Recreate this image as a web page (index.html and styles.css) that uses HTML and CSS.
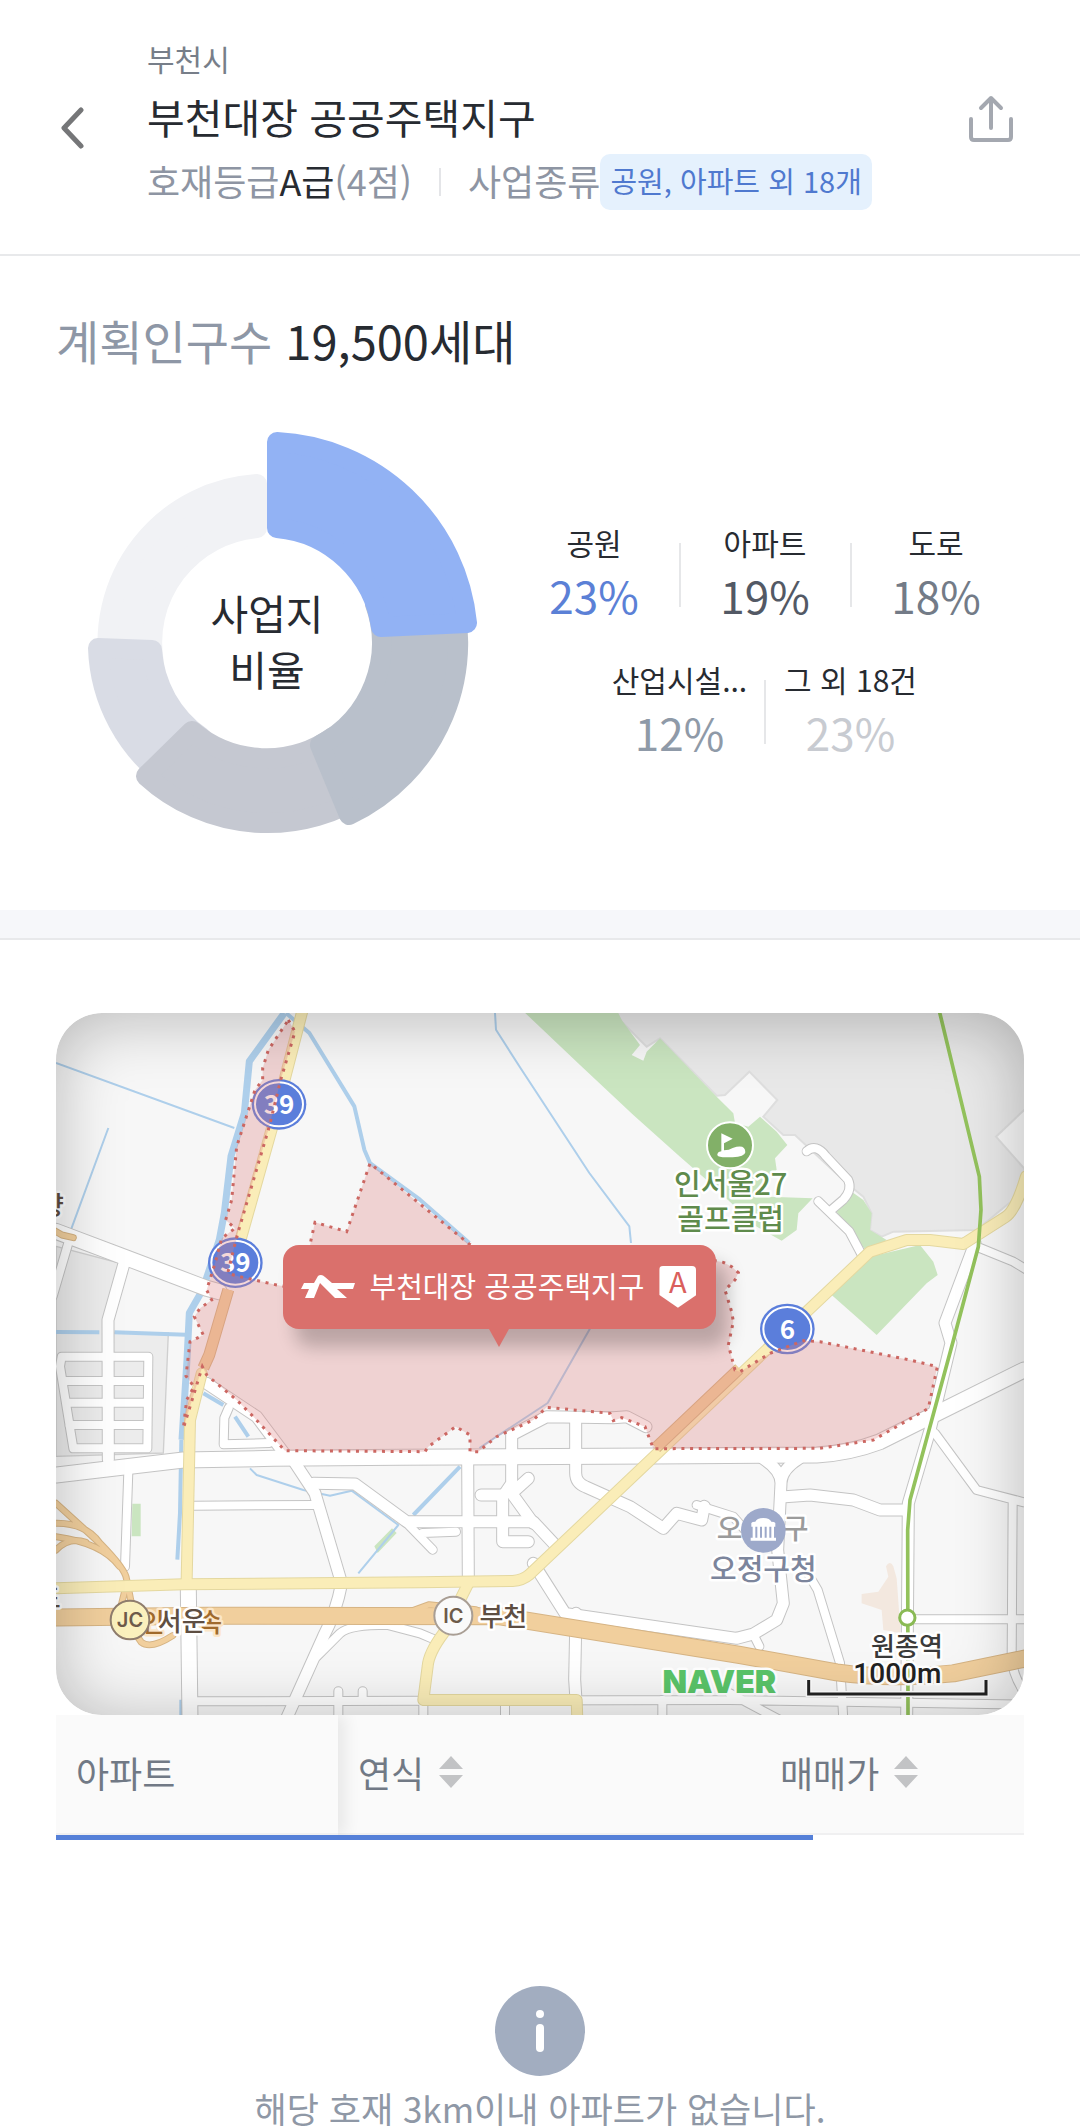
FILE: index.html
```
<!DOCTYPE html>
<html lang="ko">
<head>
    <meta charset="UTF-8">
    <meta name="viewport" content="width=device-width, initial-scale=1.0">
    <title>부천대장 공공주택지구</title>
    <link rel="stylesheet" href="styles.css">
</head>
<body>
    <header class="header">
        <button class="icon-button" type="button" aria-label="뒤로">
            <svg width="28" height="44" viewBox="0 0 28 44"><path class="back-line" d="M25 4 L8 22 L25 40"/></svg>
        </button>
        <div class="header-text">
            <p class="city">부천시</p>
            <h1>부천대장 공공주택지구</h1>
            <div class="meta">
                <span>호재등급<strong>A급</strong>(4점)</span>
                <i class="meta-divider"></i>
                <span>사업종류</span>
                <span class="chip">공원, 아파트 외 18개</span>
            </div>
        </div>
        <button class="icon-button share" type="button" aria-label="공유">
            <svg width="46" height="50" viewBox="0 0 46 50"><path class="share-line" d="M3 25 V43 Q3 46 6 46 H40 Q43 46 43 43 V25 M23 34 V4 M13 14 L23 4 L33 14"/></svg>
        </button>
    </header>

    <main>
        <section class="plan">
            <h2><span>계획인구수</span> 19,500세대</h2>
            <div class="plan-body">
                <div class="donut">
                    <svg viewBox="-215 -215 430 430" aria-hidden="true">
                        <path class="slice slice-5" d="M-157 28 A159 159 0 0 1 -10 -159 L-10 -115 A115 115 0 0 0 -113 20 Z"/>
                        <path class="slice slice-4" d="M-97 138 A169 169 0 0 1 -169 5 L-115 7 A115 115 0 0 0 -66 94 Z"/>
                        <path class="slice slice-3" d="M103 148 A180 180 0 0 1 -121 133 L-75 88 A115 115 0 0 0 66 94 Z"/>
                        <path class="slice slice-2" d="M180 -65 A191 191 0 0 1 82 172 L53 102 A115 115 0 0 0 108 -39 Z"/>
                        <path class="slice slice-1" d="M10 -201 A201 201 0 0 1 200 -20 L114 -16 A115 115 0 0 0 10 -115 Z"/>
                    </svg>
                    <p class="donut-title">사업지<br>비율</p>
                </div>
                <div class="legend">
                    <div class="legend-row">
                        <div class="legend-item"><span>공원</span><b class="rate-1">23%</b></div>
                        <i class="legend-divider"></i>
                        <div class="legend-item"><span>아파트</span><b class="rate-2">19%</b></div>
                        <i class="legend-divider"></i>
                        <div class="legend-item"><span>도로</span><b class="rate-3">18%</b></div>
                    </div>
                    <div class="legend-row">
                        <div class="legend-item"><span>산업시설...</span><b class="rate-4">12%</b></div>
                        <i class="legend-divider"></i>
                        <div class="legend-item"><span>그 외 18건</span><b class="rate-5">23%</b></div>
                    </div>
                </div>
            </div>
        </section>

        <section class="area">
            <div class="map">
                <svg class="map-canvas" viewBox="0 0 2904 2106" role="img" aria-label="부천대장 공공주택지구 지도">
                    <defs>
                        <g id="road-lg">
                            <path d="M0 1386 L382 1341 L652 1336 L1032 1333 L1792 1329 L2282 1326 Q2382 1320 2472 1286 L2612 1216 L2904 1071"/>
                            <path d="M0 655 L202 731 L452 826 L490 836"/>
                            <path d="M397 1731 L402 2120"/>
                        </g>
                        <g id="road-md">
                            <path d="M207 741 L156 921 L157 1340"/>
                            <path d="M717 1350 L777 1441 L857 1711 Q840 1800 802 1871 L690 2120"/>
                            <path d="M772 1411 L897 1413 L1052 1526 L1432 1526 L1502 1601"/>
                            <path d="M1235 1340 L1237 1701"/>
                            <path d="M1367 1330 L1367 1266 L1472 1211 L1672 1214 L1712 1211 L1770 1241"/>
                            <path d="M1367 1330 L1367 1411 L1340 1451 L1340 1586 L1417 1586"/>
                            <path d="M1275 1446 L1340 1446 M1417 1396 L1367 1441 L1432 1531"/>
                            <path d="M1559 1226 L1559 1380 Q1559 1410 1590 1422 L1722 1481 L1822 1546 L1862 1501 L1937 1521 L1945 1480"/>
                            <path d="M1432 1651 L1527 1801 L2042 1876 L2092 1863 L2162 1821 L2182 1771 L2165 1611 L2175 1411 Q2175 1371 2120 1336 M2175 1411 Q2175 1371 2230 1336"/>
                            <path d="M2187 1451 L2262 1446 L2392 1461 L2472 1491 L2542 1491"/>
                            <path d="M2757 690 L2667 930 L2685 990 L2622 1251 L2557 1471 L2552 2120"/>
                            <path d="M1560 1801 L1556 2000 L1560 2061"/>
                            <path d="M452 1111 L602 1211 L692 1331"/>
                        </g>
                        <g id="road-sm">
                            <path d="M37 690 L-10 850"/>
                            <path d="M217 1375 L207 1661"/>
                            <path d="M412 1478 L782 1476"/>
                            <path d="M1922 1476 L2032 1511 L2092 1580"/>
                            <path d="M2255 1680 L2285 1731 L2352 1950 L2362 2120"/>
                            <path d="M2637 1261 L2762 1431 L2904 1468 M2870 1466 L2867 1930 Q2867 1990 2920 2060 M2562 1819 L2920 1819"/>
                            <path d="M2772 705 L2872 746 L2920 775"/>
                            <path d="M2252 415 Q2280 390 2310 430 L2376 500 Q2390 530 2362 560 L2327 590 M2287 565 L2380 655 L2417 725"/>
                            <path d="M415 2065 L2020 2061 L2904 2075 M2020 2040 L2170 2120 M2090 1860 L2110 1900"/>
                            <path d="M847 2035 L847 2120 M920 2035 L920 2061 M1102 2061 L1102 2120 M1347 2061 L1347 2120 M1819 2061 L1819 2120"/>
                            <path d="M782 1931 L852 1861 Q880 1835 992 1835 L1092 1861 L1132 1878"/>
                            <path d="M1052 1530 L1130 1610 M1100 1560 L1200 1556"/>
                            <path d="M518 1185 L505 1215 L503 1294 L640 1290"/>
                            <path d="M17 1031 H277 L274 1306 H52 L12 1060 Z M30 1104 H275 M36 1169 H275 M40 1236 H275"/>
                        </g>
                        <g id="road-yellow">
                            <path d="M740 -10 L652 331 L520 800"/>
                            <path d="M437 1081 L402 1221 L392 1701"/>
                            <path d="M0 1726 L382 1714 L1092 1708 L1370 1704 Q1400 1702 1420 1685 L2442 716 L2552 681 L2622 681 L2722 693 L2850 611 Q2880 590 2910 490"/>
                            <path d="M1237 1711 L1162 1861 Q1118 1920 1115 1960 L1102 2061 L1562 2061 L1564 2120"/>
                        </g>
                        <g id="ramps">
                            <path d="M0 1471 L132 1591 Q210 1670 212 1700 L232 1800 M0 1531 Q90 1530 132 1591 M0 1571 Q140 1590 190 1660 M0 1611 Q40 1570 90 1588 M212 1710 L190 1800"/>
                            <path d="M230 1850 L256 1888 Q285 1910 350 1868"/>
                            <path d="M1050 1800 L1120 1775 L1260 1790 L1240 1825 L1150 1870"/>
                            <path d="M-10 650 L18 666 L52 674"/>
                        </g>
                        <path id="highway" d="M-10 1814 L452 1808 L1332 1810 Q1400 1822 2052 1926 L2342 1978 Q2500 2000 2692 1981 L2920 1934"/>
                        <path id="trunk" d="M517 830 L460 1025 L442 1065 M1800 1304 L2050 1067"/>
                        <g id="shield-route">
                            <ellipse class="shield" rx="82" ry="76"/>
                            <ellipse class="shield-ring" rx="72" ry="66"/>
                        </g>
                    </defs>

                    <!-- land and parks -->
                    <path class="town" d="M1682 0 L1697 26 L1772 101 L1812 76 L1982 248 L2007 246 L2080 176 L2164 261 L2122 311 L2182 366 L2217 366 L2372 511 L2422 551 L2447 601 L2442 651 L2477 671 L2512 656 L2762 651 L2920 520 L2904 466 L2820 371 L2920 276 L2920 -10 L1682 -10 Z"/>
                    <path class="block" d="M0 700 L190 750 L140 921 L140 960 H337 L322 1320 L0 1330 Z"/>
                    <path class="park" d="M1397 -10 L1682 -10 L1697 21 L1752 96 L1727 126 L1762 143 L1772 116 L1812 76 L1982 251 L2032 301 L2037 330 L2077 341 L2112 311 L2162 356 L2194 396 L2157 436 L2162 470 L2100 550 L2270 556 L2227 601 L2222 651 L2177 683 L2100 640 L1952 501 L1872 431 L1732 306 L1572 156 Z"/>
                    <path class="park" d="M2387 536 L2422 561 L2447 601 L2442 651 L2492 681 L2432 716 L2342 596 Z"/>
                    <path class="park" d="M2327 846 L2442 731 L2592 696 L2632 746 L2645 786 L2612 811 L2462 966 L2412 921 Z"/>
                    <path class="park" d="M229 1472 H254 V1570 H227 Z M955 1600 L1008 1546 L1022 1560 L965 1620 Z"/>
                    <path class="plaza" d="M2417 1743 L2467 1736 L2497 1691 L2490 1660 Q2502 1640 2512 1660 L2522 1696 L2534 1861 L2482 1851 L2477 1791 L2417 1771 Z"/>

                    <!-- water -->
                    <path class="water water-lg" d="M685 0 L580 145 L565 300 L525 430 L505 600 L490 680 L440 830 L400 900 L393 1040 L378 1280"/>
                    <path class="water water-md" d="M376 1280 L372 1500 L364 1640 M376 2060 V2110"/>
                    <path class="water water-md" d="M0 957 L130 958 M175 958 L390 965 M442 1141 L502 1176 M537 1211 L577 1271 M1212 1361 L1072 1506"/>
                    <path class="water water-sm" d="M0 150 L535 345 M157 345 L45 650"/>
                    <path class="water water-md" d="M690 0 L760 60 L895 280 L925 410 L942 450 L1092 560 L1240 690"/>
                    <path class="water water-sm" d="M1317 0 L1320 50 L1390 160 L1600 480 L1720 640 L1725 690 M1603 945 L1475 1170 L1270 1305"/>
                    <path class="water water-sm" d="M582 1366 L602 1386 L742 1431 L822 1448 L887 1433 L1027 1536 L907 1681"/>

                    <!-- roads, casing first and then the fill -->
                    <g class="road casing"><use href="#road-sm" class="w30"/><use href="#road-md" class="w39"/><use href="#road-lg" class="w51"/></g>
                    <g class="road white"><use href="#road-sm" class="w24"/><use href="#road-md" class="w33"/><use href="#road-lg" class="w45"/></g>
                    <g class="road ramp-casing"><use href="#ramps" class="w21"/><use href="#highway" class="w54"/></g>
                    <g class="road orange"><use href="#ramps" class="w15"/><use href="#highway" class="w48"/></g>
                    <use href="#road-yellow" class="road yellow-casing w36"/>
                    <use href="#road-yellow" class="road yellow w30"/>
                    <use href="#trunk" class="road trunk ramp-casing w36"/>
                    <use href="#trunk" class="road trunk orange w30"/>

                    <!-- subway line -->
                    <path class="subway" d="M2649 -10 L2770 491 L2775 590 L2767 701 L2690 990 L2562 1461 L2555 1551 L2556 2110"/>
                    <circle class="station" cx="2554" cy="1814" r="23"/>

                    <use href="#shield-route" x="669" y="274"/>
                    <use href="#shield-route" x="538" y="749"/>
                    <use href="#shield-route" x="2194" y="948"/>
                    <text class="shield-text" x="669" y="303">39</text>
                    <text class="shield-text" x="538" y="778">39</text>
                    <text class="shield-text" x="2194" y="977">6</text>

                    <path class="district" d="M697 21 L717 56 L674 201 L640 340 L547 655 L535 701 L515 781 L552 791 L662 816 L740 830 L765 681 L777 628 L872 656 L942 451 L1237 691 L1300 740 L1960 740 L2002 748 L2027 761 L2047 779 L2037 801 L2007 831 L2027 896 L2032 926 L2017 996 L2037 1071 L2052 1076 L2142 1021 L2242 983 L2292 986 L2562 1041 L2644 1061 L2617 1186 L2452 1281 L2292 1306 L1792 1307 L1767 1241 L1697 1214 L1672 1223 L1662 1201 L1472 1183 L1432 1221 L1322 1271 L1267 1316 L1242 1316 L1242 1266 L1199 1241 L1117 1301 L1107 1316 L687 1313 L592 1211 L542 1161 L452 1086 L439 1061 L382 1246 L392 1161 L414 1121 L390 1089 L402 986 L442 966 L415 911 L432 886 L467 861 L452 831 L477 751 L497 676 L537 646 L509 621 L527 561 L542 401 L597 231 L620 201 L620 166 L637 111 Z"/>

                    <!-- place marks -->
                    <circle class="mark-golf" cx="2022" cy="397" r="69"/>
                    <path class="mark-shape" d="M1996 361 L2030 377 L2004 391 V412 Q2020 412 2030 405 Q2068 392 2068 418 Q2066 432 2030 433 H2000 Q1982 431 1984 423 Q1986 416 1996 415 Z"/>
                    <text class="label golf" x="2024" y="545">인서울27</text>
                    <text class="label golf" x="2024" y="652">골프클럽</text>
                    <text class="label ward" x="2021" y="1579">오</text>
                    <text class="label ward" x="2219" y="1579">구</text>
                    <circle class="mark-office" cx="2122" cy="1552" r="67"/>
                    <path class="mark-shape" d="M2086 1541 V1530 Q2088 1526 2098 1526 Q2102 1516 2122 1515 Q2142 1516 2146 1526 Q2156 1526 2158 1530 V1541 Z M2090 1541 h8 v33 h-8 Z M2104 1541 h8 v33 h-8 Z M2118 1541 h8 v33 h-8 Z M2132 1541 h8 v33 h-8 Z M2146 1541 h8 v33 h-8 Z M2084 1574 H2160 V1583 H2084 Z"/>
                    <text class="label office" x="2122" y="1700">오정구청</text>
                    <text class="label station-name" x="2553" y="1929">원종역</text>
                    <text class="label expressway" x="290" y="1856">인</text>
                    <text class="label expressway" x="463" y="1856">속</text>
                    <text class="label exit" x="377" y="1854">서운</text>
                    <circle class="junction" cx="222" cy="1821" r="58"/>
                    <text class="junction-text" x="222" y="1842">JC</text>
                    <circle class="exit-mark" cx="1192" cy="1808" r="57"/>
                    <text class="junction-text" x="1192" y="1830">IC</text>
                    <text class="label exit" x="1342" y="1839">부천</text>
                    <text class="label exit" x="-12" y="605">향</text>
                    <text class="label exit" x="-22" y="1785">도</text>

                    <path class="scale-halo" d="M2258 2001 V2043 H2790 V2001"/>
                    <path class="scale-line" d="M2258 2001 V2043 H2790 V2001"/>
                    <text class="label scale-text" x="2524" y="2011">1000m</text>
                    <text class="label naver" x="1990" y="2041">NAVER</text>
                </svg>
                <div class="pin">
                    <svg width="54" height="24" viewBox="0 0 54 24"><path class="pin-shape" d="M3 8 H13 L17 1 Q18 0 20 0 Q22 0 24 2 L31 8 H54 L52 14 H36 L46 23 H34 L19 8 L13 23 H4 L8 14 H0 Z"/></svg>
                    <span class="pin-name">부천대장 공공주택지구</span>
                    <span class="grade">A</span>
                </div>
            </div>

            <table class="apartments">
                <thead>
                    <tr>
                        <th class="col-name" scope="col">아파트</th>
                        <th class="col-year" scope="col"><button class="sort" type="button">연식<svg width="24" height="32" viewBox="0 0 24 32"><path d="M12 0 L24 13 H0 Z M0 19 H24 L12 32 Z"/></svg></button></th>
                        <th scope="col"><button class="sort" type="button">매매가<svg width="24" height="32" viewBox="0 0 24 32"><path d="M12 0 L24 13 H0 Z M0 19 H24 L12 32 Z"/></svg></button></th>
                    </tr>
                </thead>
            </table>
            <div class="scroll-bar"></div>

            <div class="empty">
                <svg width="90" height="90" viewBox="0 0 90 90" aria-hidden="true">
                    <circle class="info-bg" cx="45" cy="45" r="45"/>
                    <circle class="info-mark" cx="45" cy="28" r="4"/>
                    <rect class="info-mark" x="41" y="38" width="8" height="28" rx="4"/>
                </svg>
                <p>해당 호재 3km이내 아파트가 없습니다.</p>
            </div>
        </section>
    </main>
</body>
</html>
```
FILE: styles.css
```
* {
    box-sizing: border-box;
}
body {
    margin: 0;
    background: #fff;
    color: #272b31;
    font-family: "Noto Sans CJK KR", "Noto Sans", sans-serif;
}
h1, h2, p {
    margin: 0;
    font-weight: 400;
}
button {
    padding: 0;
    border: none;
    background: none;
    color: inherit;
    font: inherit;
    cursor: pointer;
}

/* header */
.header {
    display: flex;
    align-items: flex-start;
    padding: 38px 66px 44px 56px;
    border-bottom: 2px solid #e8e9eb;
}
.icon-button {
    display: flex;
    flex: none;
    width: 91px;
    padding-top: 68px;
}
.icon-button svg {
    display: block;
}
.share {
    width: 46px;
    padding-top: 56px;
}
.back-line, .share-line {
    fill: none;
    stroke: #757678;
    stroke-width: 5;
    stroke-linecap: round;
    stroke-linejoin: round;
}
.share-line {
    stroke: #a4a8b0;
    stroke-width: 4;
}
.header-text {
    display: flex;
    flex: 1;
    flex-direction: column;
    gap: 10px;
}
.city {
    color: #777e89;
    font-size: 30px;
    line-height: 40px;
}
.header h1 {
    font-size: 41px;
    line-height: 56px;
}
.meta {
    display: flex;
    align-items: center;
    color: #8e95a3;
    font-size: 36px;
    white-space: nowrap;
}
.meta span {
    padding-bottom: 4px;
    line-height: 52px;
}
.meta strong {
    color: #272b31;
    font-weight: 400;
}
.meta-divider {
    width: 2px;
    height: 28px;
    margin: 0 27px;
    background: #e4e5e8;
}
.meta .chip {
    padding: 0 10px 4px;
    border-radius: 10px;
    background: #e5f1fd;
    color: #4f79cf;
    font-size: 29px;
}

/* plan */
.plan {
    padding: 56px 32px 52px 52px;
}
.plan h2 {
    padding-left: 4px;
    font-size: 47px;
    line-height: 56px;
}
.plan h2 span {
    color: #8e97a6;
}
.plan-body {
    display: flex;
    align-items: center;
    margin-top: 60px;
}
.donut {
    display: grid;
    flex: none;
    width: 430px;
    place-items: center;
}
.donut svg, .donut-title {
    grid-area: 1 / 1;
}
.donut svg {
    display: block;
    width: 100%;
}
.donut-title {
    padding-bottom: 6px;
    font-size: 41px;
    line-height: 56px;
    text-align: center;
}
.slice {
    stroke-width: 20;
    stroke-linejoin: round;
}
.slice-1 { fill: #92b2f4; stroke: #92b2f4; }
.slice-2 { fill: #b9c0cb; stroke: #b9c0cb; }
.slice-3 { fill: #c5c8d1; stroke: #c5c8d1; }
.slice-4 { fill: #d9dce5; stroke: #d9dce5; }
.slice-5 { fill: #f1f2f5; stroke: #f1f2f5; }
.legend {
    display: flex;
    flex: 1;
    flex-direction: column;
    gap: 35px;
}
.legend-row {
    display: flex;
    align-items: center;
    justify-content: center;
}
.legend-item {
    display: flex;
    flex-direction: column;
    gap: 7px;
    width: 169px;
    padding-bottom: 3px;
    text-align: center;
    white-space: nowrap;
}
.legend-item span {
    font-size: 30px;
    line-height: 36px;
}
.legend-item b {
    font-size: 44px;
    font-weight: 400;
    line-height: 56px;
}
.legend-divider {
    width: 2px;
    height: 64px;
    background: #e6e7e9;
}
.rate-1 { color: #5b80d6; }
.rate-2 { color: #535965; }
.rate-3 { color: #737b87; }
.rate-4 { color: #8f9aa8; }
.rate-5 { color: #c8cbd1; }

/* map */
.area {
    padding: 0 56px;
}
.area::before {
    display: block;
    height: 28px;
    margin: 0 -56px 73px;
    border-bottom: 2px solid #e8e9eb;
    background: #f6f7fa;
    content: "";
}
.map {
    position: relative;
    overflow: hidden;
    border-radius: 46px;
    background: #f7f7f7;
}
.map::after {
    position: absolute;
    inset: 0;
    border-radius: 46px;
    box-shadow: inset 0 6px 66px rgba(0, 0, 0, 0.26);
    content: "";
    pointer-events: none;
}
.map-canvas {
    display: block;
    width: 100%;
    height: auto;
}
.town { fill: #e8e8e8; stroke: #dedede; stroke-width: 6; }
.block { fill: #ececec; stroke: #cfcfcf; stroke-width: 4; }
.park { fill: #cae5c0; }
.plaza { fill: #f3e8df; }
.water {
    fill: none;
    stroke: #aecfeb;
    stroke-linejoin: round;
}
.water-lg { stroke-width: 21; }
.water-md { stroke-width: 12; }
.water-sm { stroke-width: 6; }
.road {
    fill: none;
    stroke-linecap: round;
    stroke-linejoin: round;
}
.trunk { stroke-linecap: butt; }
.casing { stroke: #c4c4c4; }
.white { stroke: #fff; }
.yellow-casing { stroke: #e4d8a0; }
.yellow { stroke: #faedb8; }
.ramp-casing { stroke: #d6b484; }
.orange { stroke: #f1cf9d; }
.w15 { stroke-width: 15; }
.w21 { stroke-width: 21; }
.w24 { stroke-width: 24; }
.w30 { stroke-width: 30; }
.w33 { stroke-width: 33; }
.w36 { stroke-width: 36; }
.w39 { stroke-width: 39; }
.w45 { stroke-width: 45; }
.w48 { stroke-width: 48; }
.w51 { stroke-width: 51; }
.w54 { stroke-width: 54; }
.subway {
    fill: none;
    stroke: #93c25c;
    stroke-width: 11;
}
.station { fill: #fff; stroke: #8aba55; stroke-width: 9; }
.shield { fill: #5b7edb; }
.shield-ring { fill: none; stroke: #fff; stroke-width: 6; }
.shield-text {
    fill: #fff;
    font-size: 78px;
    font-weight: 700;
    text-anchor: middle;
}
.district {
    fill: rgba(222, 125, 125, 0.3);
    stroke: #cc6762;
    stroke-width: 9;
    stroke-dasharray: 9 17;
}
.label {
    paint-order: stroke;
    stroke: #fff;
    stroke-width: 15;
    stroke-linejoin: round;
    font-size: 78px;
    font-weight: 500;
    text-anchor: middle;
}
.golf { fill: #5f8b4c; font-size: 87px; }
.ward { fill: #9b9b9b; font-size: 84px; }
.office { fill: #7c859c; font-size: 87px; }
.station-name { fill: #3a3a3a; }
.expressway { fill: #a06a2c; stroke: #fbe6c8; }
.exit { fill: #5e4e42; }
.junction { fill: #faf0bd; stroke: #8f7d6d; stroke-width: 6; }
.exit-mark { fill: #fafafa; stroke: #a99e94; stroke-width: 6; }
.junction-text {
    fill: #6d5a4a;
    font-family: Inter, sans-serif;
    font-size: 60px;
    font-weight: 600;
    text-anchor: middle;
}
.mark-golf { fill: #82b068; stroke: #fff; stroke-width: 6; }
.mark-office { fill: #9da9ca; }
.mark-shape { fill: #fff; }
.scale-halo { fill: none; stroke: #fff; stroke-width: 18; }
.scale-line { fill: none; stroke: #222; stroke-width: 9; }
.scale-text {
    fill: #222;
    font-family: Roboto, sans-serif;
    font-size: 84px;
}
.naver {
    fill: #5ac469;
    font-family: Inter, sans-serif;
    font-size: 96px;
    font-weight: 900;
}
.pin {
    display: flex;
    position: absolute;
    top: 33%;
    left: 23.4%;
    z-index: 1;
    align-items: center;
    gap: 15px;
    height: 84px;
    padding: 0 20px 0 18px;
    border-radius: 16px;
    background: #da706c;
    box-shadow: 12px 18px 18px rgba(0, 0, 0, 0.22);
    color: #fff;
    white-space: nowrap;
}
.pin::after {
    position: absolute;
    top: 100%;
    left: 50%;
    border: 10px solid transparent;
    border-top: 18px solid #da706c;
    border-bottom: 0;
    transform: translateX(-50%);
    content: "";
}
.pin-shape { fill: #fff; }
.pin-name {
    padding-bottom: 4px;
    font-size: 29px;
}
.grade {
    width: 37px;
    height: 42px;
    border-radius: 4px;
    background: #fff;
    clip-path: polygon(0 0, 100% 0, 100% 70%, 50% 100%, 0 70%);
    color: #da5f5c;
    font-size: 29px;
    line-height: 28px;
    text-align: center;
}

/* apartment list */
.apartments {
    width: 100%;
    border-collapse: separate;
    border-spacing: 0;
    table-layout: fixed;
    background: #fafafa;
    color: #717985;
    font-size: 36px;
}
.apartments th {
    height: 120px;
    padding: 0 20px 4px;
    border-bottom: 2px solid #f0f0f1;
    font-weight: 400;
    text-align: left;
}
.apartments .col-name {
    position: relative;
    width: 282px;
    background: #fafafa;
    box-shadow: 8px 0 14px rgba(0, 0, 0, 0.07);
    clip-path: inset(0 -30px 0 0);
}
.apartments .col-year {
    width: 422px;
}
.sort {
    display: flex;
    align-items: center;
    gap: 15px;
}
.sort svg {
    fill: #c2c3c5;
}
.scroll-bar {
    width: 78.2%;
    height: 5px;
    background: #5580d8;
}
.empty {
    display: flex;
    flex-direction: column;
    align-items: center;
    gap: 14px;
    padding-top: 146px;
    color: #8f98a6;
    font-size: 35px;
    line-height: 36px;
}
.info-bg { fill: #a2adc0; }
.info-mark { fill: #fff; }
```
